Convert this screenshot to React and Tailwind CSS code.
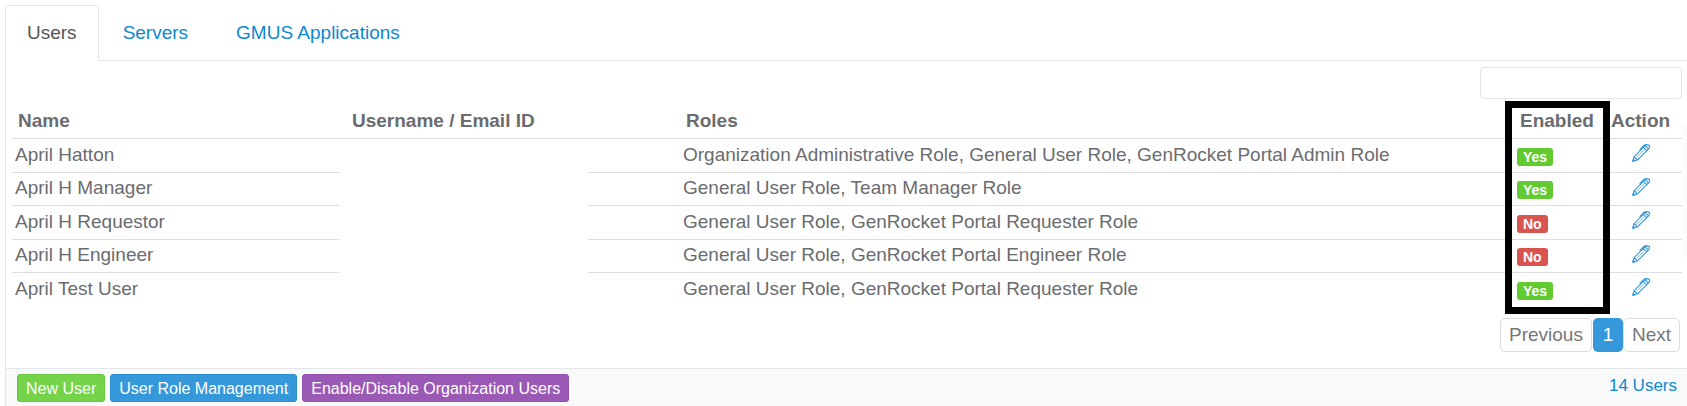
const tabs = [
  { label: 'Users', active: true },
  { label: 'Servers' },
  { label: 'GMUS Applications' },
]

const users = [
  { name: 'April Hatton', roles: 'Organization Administrative Role, General User Role, GenRocket Portal Admin Role', enabled: true },
  { name: 'April H Manager', roles: 'General User Role, Team Manager Role', enabled: true },
  { name: 'April H Requestor', roles: 'General User Role, GenRocket Portal Requester Role', enabled: false },
  { name: 'April H Engineer', roles: 'General User Role, GenRocket Portal Engineer Role', enabled: false },
  { name: 'April Test User', roles: 'General User Role, GenRocket Portal Requester Role', enabled: true },
]

const footerButtons = [
  { label: 'New User', color: 'bg-[#74d348] border-[#67c63b]' },
  { label: 'User Role Management', color: 'bg-[#3498db] border-[#2a8fd3]' },
  { label: 'Enable/Disable Organization Users', color: 'bg-[#9b59b6] border-[#9350ae]' },
]

function PenIcon() {
  return (
    <svg viewBox="0 0 18 18" className="w-[18px] h-[18px]" fill="none" stroke="currentColor" strokeLinecap="round" strokeLinejoin="round" aria-hidden="true">
      {/* barrel */}
      <path d="M2.2 12.6 L11.4 3.4 L14.8 6.6 L5.4 15.8" strokeWidth="1.1" />
      <path d="M5 13 L12 6" strokeWidth="0.6" />
      {/* cap and clip */}
      <path d="M11.4 3.4 L13.2 1.6 L16.4 4.8 L14.8 6.6" strokeWidth="1.1" />
      <path d="M13.2 1.6 L14.4 0.6 L17.4 1.4 L17.4 3.6 L16.4 4.8" strokeWidth="1.1" />
      <path d="M8 5.4 L12.4 1 L14.4 0.6" strokeWidth="1.2" />
      {/* nib */}
      <path d="M2.2 12.6 L5.4 15.8 L0.8 17.2 Z" strokeWidth="1.2" />
      <path d="M0.8 17.2 L1.4 15 L3 16.5 Z" fill="currentColor" strokeWidth="0.8" />
    </svg>
  )
}

function Badge({ enabled }) {
  return (
    <span
      className={`block w-fit h-[18px] mt-[3px] px-[6px] rounded-[3px] text-[14px] leading-[19px] font-bold text-white ${
        enabled ? 'bg-[#62cb31]' : 'bg-[#d9534f]'
      }`}
    >
      {enabled ? 'Yes' : 'No'}
    </span>
  )
}

export default function App() {
  return (
    <div className="min-h-screen pl-[5px] pt-[5px] flex flex-col bg-white text-[19px] leading-[24px] text-[#6a6c6f] font-['Liberation_Sans',Arial,sans-serif]">
      {/* Tabs */}
      <nav className="flex items-end">
        {tabs.map((tab) => (
          <a
            key={tab.label}
            href="#"
            className={
              tab.active
                ? 'h-14 px-[21px] pt-[15px] border border-b-0 border-[#e4e5e7] rounded-t text-[#555]'
                : 'h-14 px-6 pt-4 border-b border-[#e4e5e7] text-[#0f87cf]'
            }
          >
            {tab.label}
          </a>
        ))}
        <div className="flex-1 h-14 border-b border-[#e4e5e7]" />
      </nav>

      {/* Panel */}
      <div className="flex-1 flex flex-col border-l border-[#e4e5e7]">
        <div className="flex-1 pl-[6px] pr-[5px] pt-[6px]">
          <div className="flex justify-end">
            <input
              type="text"
              aria-label="Search users"
              className="w-[202px] h-8 px-2 border border-[#e4e5e7] rounded outline-none"
            />
          </div>

          <div className="relative mt-[2px]">
            <table className="w-full table-fixed border-collapse text-left">
              <thead>
                <tr className="h-[37px] border-b border-[#ddd]">
                  <th className="w-1/5 pl-[6px] pt-[3px]">Name</th>
                  <th className="w-1/5 pl-[6px] pt-[3px]">Username / Email ID</th>
                  <th className="pl-[6px] pt-[3px]">Roles</th>
                  <th className="w-[91px] pl-[6px] pt-[3px]">Enabled</th>
                  <th className="w-[77px] pl-[6px] pt-[3px]">Action</th>
                </tr>
              </thead>
              <tbody>
                {users.map((user) => (
                  <tr key={user.name} className="h-[34px] even:h-[33px] border-b border-[#ddd] last:border-b-0">
                    <td className="pl-[3px] pb-px">{user.name}</td>
                    <td />
                    <td className="pl-[3px] pb-px">{user.roles}</td>
                    <td className="pl-[3px]"><Badge enabled={user.enabled} /></td>
                    <td className="pb-1">
                      <button type="button" aria-label={`Edit ${user.name}`} className="block ml-[27px] text-[#3498db]">
                        <PenIcon />
                      </button>
                    </td>
                  </tr>
                ))}
              </tbody>
            </table>
            {/* Blank over the usernames */}
            <div className="absolute left-[327px] top-[39px] bottom-0 w-[249px] bg-white" />
            {/* Highlight round the Enabled column */}
            <div className="absolute right-[72px] top-0 -bottom-2 w-[105px] border-[7px] border-black" />
            {/* Soft edge of the page */}
            <div className="absolute -right-[5px] top-6 bottom-12 w-[5px] bg-linear-to-r from-white to-[#f9f9f9]" />
          </div>

          <div className="flex justify-end mt-3 pr-[2px] text-[#777]">
            <button type="button" className="h-[34px] px-2 mr-px border border-[#ddd] rounded-[5px]">Previous</button>
            <button type="button" className="h-[34px] w-[30px] rounded-[5px] bg-[#3498db] text-white">1</button>
            <button type="button" className="h-[34px] px-2 border border-[#ddd] rounded-[5px]">Next</button>
          </div>
        </div>

        {/* Footer */}
        <div className="flex items-start h-[38px] pl-[11px] pr-[10px] pt-[5px] border-t border-[#e4e5e7] bg-[#f7f9fa] text-[16px]">
          <div className="flex gap-[5px]">
            {footerButtons.map((button) => (
              <button key={button.label} type="button" className={`h-7 px-2 pt-px border rounded-[3px] text-white ${button.color}`}>
                {button.label}
              </button>
            ))}
          </div>
          <a href="#" className="ml-auto text-[17px] text-[#0f87cf]">14 Users</a>
        </div>
      </div>
    </div>
  )
}
